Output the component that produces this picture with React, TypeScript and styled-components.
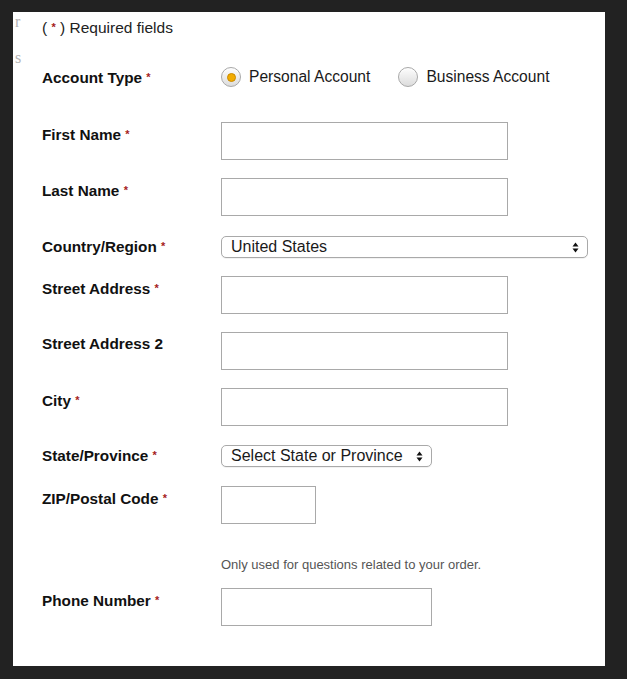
import React, { useState } from 'react'
import styled, { createGlobalStyle } from 'styled-components'

const GlobalStyle = createGlobalStyle`
  html, body {
    margin: 0;
    padding: 0;
    background: #222222;
  }
  body {
    font-family: "Liberation Sans", Arial, Helvetica, sans-serif;
  }
`

type Field = {
  label: string
  required: boolean
  kind: 'input' | 'select'
  width: number
  mt: number
  value?: string
}

const fields: Field[] = [
  { label: 'First Name', required: true, kind: 'input', width: 287, mt: 34 },
  { label: 'Last Name', required: true, kind: 'input', width: 287, mt: 18 },
  { label: 'Country/Region', required: true, kind: 'select', width: 367, mt: 20, value: 'United States' },
  { label: 'Street Address', required: true, kind: 'input', width: 287, mt: 18 },
  { label: 'Street Address 2', required: false, kind: 'input', width: 287, mt: 18 },
  { label: 'City', required: true, kind: 'input', width: 287, mt: 18 },
  { label: 'State/Province', required: true, kind: 'select', width: 211, mt: 19, value: 'Select State or Province' },
  { label: 'ZIP/Postal Code', required: true, kind: 'input', width: 95, mt: 19 },
]

function Arrows() {
  return (
    <svg width="7" height="11" viewBox="0 0 7 11">
      <path d="M3.5 0.5 L6.5 4.5 L0.5 4.5 Z" fill="#111" />
      <path d="M0.5 6.5 L6.5 6.5 L3.5 10.5 Z" fill="#111" />
    </svg>
  )
}

function App() {
  const [account, setAccount] = useState<'personal' | 'business'>('personal')

  return (
    <>
      <GlobalStyle />
      <Panel>
        <Gutter>
          <Stray>r</Stray>
          <Stray $mt={20}>s</Stray>
        </Gutter>
        <Form>
          <Note>
            ( <Star>*</Star> ) Required fields
          </Note>

          <Row $mt={29}>
            <Label $pt={2}>
              Account Type <Star>*</Star>
            </Label>
            <Radios>
              <RadioOption onClick={() => setAccount('personal')}>
                <Radio $checked={account === 'personal'} />
                Personal Account
              </RadioOption>
              <RadioOption onClick={() => setAccount('business')}>
                <Radio $checked={account === 'business'} />
                Business Account
              </RadioOption>
            </Radios>
          </Row>

          {fields.map((f) => (
            <Row key={f.label} $mt={f.mt}>
              <Label $pt={f.kind === 'input' ? 3 : 1}>
                {f.label} {f.required && <Star>*</Star>}
              </Label>
              {f.kind === 'input' ? (
                <Input type="text" $w={f.width} />
              ) : (
                <Select $w={f.width}>
                  <span>{f.value}</span>
                  <Arrows />
                </Select>
              )}
            </Row>
          ))}

          <Hint>Only used for questions related to your order.</Hint>

          <Row $mt={15}>
            <Label $pt={3}>
              Phone Number <Star>*</Star>
            </Label>
            <Input type="tel" $w={211} />
          </Row>
        </Form>
      </Panel>
    </>
  )
}

export default App

const Panel = styled.div`
  margin: 12px 0 0 13px;
  width: 592px;
  height: 654px;
  background: #ffffff;
  display: flex;
  overflow: hidden;
`
const Gutter = styled.div`
  width: 29px;
  flex-shrink: 0;
  display: flex;
  flex-direction: column;
  padding-top: 2px;
  padding-left: 2px;
  box-sizing: border-box;
`
const Stray = styled.span<{ $mt?: number }>`
  font-family: "Liberation Serif", "Times New Roman", serif;
  font-size: 16px;
  line-height: 16px;
  color: #b5b5b5;
  margin-top: ${(p) => p.$mt || 0}px;
`
const Form = styled.div`
  display: flex;
  flex-direction: column;
  padding-top: 6px;
`
const Note = styled.div`
  font-size: 15.5px;
  line-height: 18px;
  color: #222;
`
const Star = styled.span`
  color: #a51c1c;
  font-size: 11px;
  font-weight: bold;
  vertical-align: 2px;
`
const Row = styled.div<{ $mt: number }>`
  display: flex;
  align-items: flex-start;
  margin-top: ${(p) => p.$mt}px;
`
const Label = styled.div<{ $pt: number }>`
  width: 179px;
  flex-shrink: 0;
  padding-top: ${(p) => p.$pt}px;
  font-size: 15.3px;
  line-height: 18px;
  font-weight: bold;
  color: #111;
`
const Radios = styled.div`
  display: flex;
  gap: 28px;
  height: 22px;
  align-items: center;
`
const RadioOption = styled.label`
  display: flex;
  align-items: center;
  gap: 8px;
  font-size: 15.6px;
  color: #1a1a1a;
  cursor: pointer;
`
const Radio = styled.span<{ $checked: boolean }>`
  width: 20px;
  height: 20px;
  border-radius: 50%;
  box-sizing: border-box;
  border: 1px solid #a8a8a8;
  background: linear-gradient(#fdfdfd, #dcdcdc);
  box-shadow: inset 0 1px 1px rgba(255, 255, 255, 0.8);
  display: flex;
  align-items: center;
  justify-content: center;
  &::after {
    content: '';
    display: ${(p) => (p.$checked ? 'block' : 'none')};
    width: 9px;
    height: 9px;
    border-radius: 50%;
    background: #f2ac00;
    border: 1px solid #c98a00;
    box-sizing: border-box;
  }
`
const Input = styled.input<{ $w: number }>`
  width: ${(p) => p.$w}px;
  height: 38px;
  box-sizing: border-box;
  border: 1px solid #a9a9a9;
  border-radius: 0;
  background: #fff;
  padding: 0 8px;
  font-family: inherit;
  font-size: 15px;
  outline: none;
`
const Select = styled.div<{ $w: number }>`
  width: ${(p) => p.$w}px;
  height: 22px;
  box-sizing: border-box;
  border: 1px solid #a9a9a9;
  border-radius: 5px;
  background: #fff;
  display: flex;
  align-items: center;
  justify-content: space-between;
  padding: 0 8px 0 9px;
  font-size: 16px;
  color: #1a1a1a;
  box-shadow: 0 1px 0 rgba(0, 0, 0, 0.05);
`
const Hint = styled.div`
  margin-top: 33px;
  margin-left: 179px;
  font-size: 13px;
  line-height: 16px;
  color: #555;
`
